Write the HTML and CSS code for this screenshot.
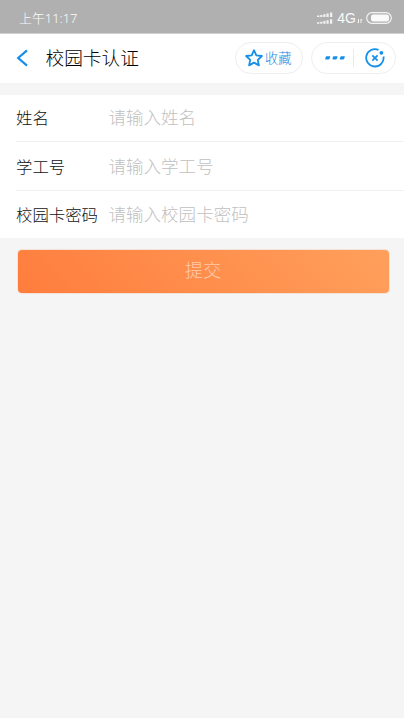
FILE: index.html
```html
<!DOCTYPE html>
<html lang="zh-CN">
<head>
<meta charset="utf-8">
<title>校园卡认证</title>
<link rel="stylesheet" href="styles.css">
</head>
<body>
<div class="status">
  <span class="time">上午11:17</span>
  <div class="indicators">
    <svg class="signal" width="16" height="13" viewBox="0 0 16 13" fill="#f2f2f2"><path d="M0 3.5h2.4v1.5H0zM3.2 3h2.2v2H3.2zM6.3 2.3h2.2V5H6.3zM9.5 1.4h2.2V5H9.5zM13 .4h2.2V5H13zM0 10.3h2.4v1.4H0zM3.2 9.8h2.2v1.9H3.2zM6.3 9h2.2v2.7H6.3zM9.5 8.2h2.2v3.5H9.5zM13 7.2h2.2v4.5H13z"/></svg>
    <span class="network">4G</span>
    <svg class="data" width="6" height="6" viewBox="0 0 6 6" fill="none" stroke="#f2f2f2"><path d="M1.5 1v4M4 1v4M.5 4l1 1M4 1l1.2 1"/></svg>
    <svg class="battery" width="26" height="12" viewBox="0 0 26 12"><rect x=".7" y=".7" width="24.6" height="10.6" rx="5.3" fill="none" stroke="#f2f2f2" stroke-width="1.2"/><rect x="5" y="2.5" width="18" height="7" rx="2.2" fill="#fafafa"/></svg>
  </div>
</div>
<header class="nav">
  <svg class="back" width="13" height="18" viewBox="0 0 13 18" fill="none" stroke="#168fe9" stroke-width="2.2"><path d="M11 1.4 2.2 9l8.8 7.6"/></svg>
  <h1 class="title">校园卡认证</h1>
  <div class="pill favorite">
    <svg width="18" height="18" viewBox="0 0 18 18" fill="none" stroke="#168fe9" stroke-width="1.8" stroke-linejoin="round"><path d="m9 1.2 2.3 5.1 5.6.7-4.1 3.8 1.1 5.6L9 13.6l-4.9 2.8 1.1-5.6L1.1 7l5.6-.7z"/></svg>
    <span class="caption">收藏</span>
  </div>
  <div class="pill actions">
    <svg class="more" width="20" height="4" viewBox="0 0 20 4" fill="#168fe9"><path d="M1.6.3h3.2q.6 0 .4.6L4.7 2.6q-.3.8-1 .8H.7q-.7 0-.5-.6L.7 1q.2-.7.9-.7zM8.9.3h3.2q.6 0 .4.6L12 2.6q-.3.8-1 .8H8q-.7 0-.5-.6L8 1q.2-.7.9-.7zM16.2.3h3.2q.6 0 .4.6l-.5 1.7q-.3.8-1 .8h-3q-.7 0-.5-.6l.5-1.8q.2-.7.9-.7z"/></svg>
    <span class="divider"></span>
    <svg class="close" width="20" height="20" viewBox="0 0 20 20" fill="none" stroke="#168fe9"><path d="M13.5 1.9A8.7 8.7 0 1 0 18.5 8.5" stroke-width="1.8"/><path d="m7.3 7.4 5.3 5.3m0-5.3-5.3 5.3" stroke-width="1.7"/><circle cx="16.4" cy="4.8" r="1.9" fill="#168fe9" stroke="none"/></svg>
  </div>
</header>
<form class="form">
  <label class="row"><span class="label">姓名</span><input class="field" type="text" placeholder="请输入姓名"></label>
  <label class="row"><span class="label">学工号</span><input class="field" type="text" placeholder="请输入学工号"></label>
  <label class="row"><span class="label">校园卡密码</span><input class="field" type="password" placeholder="请输入校园卡密码"></label>
</form>
<button class="submit" type="button">提交</button>
</body>
</html>
```
FILE: styles.css
```css
* { box-sizing: border-box; }
body {
  margin: 0;
  min-height: 718px;
  background: #f5f5f5;
  font-family: "Noto Sans CJK SC", sans-serif;
  font-weight: 300;
}
svg { display: block; flex: none; }
.status {
  height: 34px;
  padding: 3px 12px 0 19px;
  display: flex;
  align-items: center;
  justify-content: space-between;
  background: #b0b0b0;
  border-bottom: 1px solid #d0d0d0;
  color: #fafafa;
}
.time { font-size: 12.9px; line-height: 20px; font-weight: 300; font-family: "Noto Sans", "Noto Sans CJK SC", sans-serif; }
.indicators { display: flex; align-items: center; }
.network { margin-left: 4px; font: 14px/20px "Liberation Sans", sans-serif; }
.data { margin: 5px 3px 0 1px; }
.nav {
  height: 49px;
  padding: 0 8px 1px 16px;
  display: flex;
  align-items: center;
  background: #fff;
}
.title {
  flex: 1;
  margin: 0 0 0 16.5px;
  padding-bottom: 3px;
  font-size: 18.7px;
  line-height: 28px;
  font-weight: 300;
  color: #000;
}
.pill {
  height: 32px;
  display: flex;
  align-items: center;
  border: 1px solid #eee;
  border-radius: 16px;
}
.favorite {
  width: 68px;
  padding-left: 9px;
  gap: 2px;
  font-size: 13.2px;
  line-height: 20px;
  font-weight: 300;
  color: #0c86e2;
}
.caption { padding-bottom: 1px; }
.actions { width: 85px; margin-left: 8px; padding-left: 13px; }
.divider { width: 1px; height: 18px; margin: 0 11px 0 8px; background: #eaeaea; }
.form { margin-top: 12px; padding-left: 16px; background: #fff; }
.row { height: 46px; padding-bottom: 2px; display: flex; align-items: center; }
.row + .row { height: 49px; padding-bottom: 0; border-top: 1px solid #f0f0f0; }
.row:last-child { height: 48px; padding-bottom: 1px; }
.label { width: 92.5px; flex: none; font-size: 16.4px; line-height: 24px; color: #111; }
.field {
  flex: 1;
  min-width: 0;
  padding: 0;
  border: 0;
  outline: 0;
  background: none;
  font: 300 17.55px/26px "Noto Sans CJK SC", sans-serif;
}
.field::placeholder { color: #bfbfbf; opacity: 1; }
.submit {
  display: block;
  width: 371px;
  height: 43px;
  margin: 12px 0 0 18px;
  padding: 0 1px 5px 0;
  border: 0;
  border-radius: 4px;
  box-shadow: 0 0 0 1px #f3e2d8;
  background: linear-gradient(45deg, #ff7d3d, #ffa05c);
  font: 300 18.3px/26px "Noto Sans CJK SC", sans-serif;
  color: #ffcbab;
}
```
